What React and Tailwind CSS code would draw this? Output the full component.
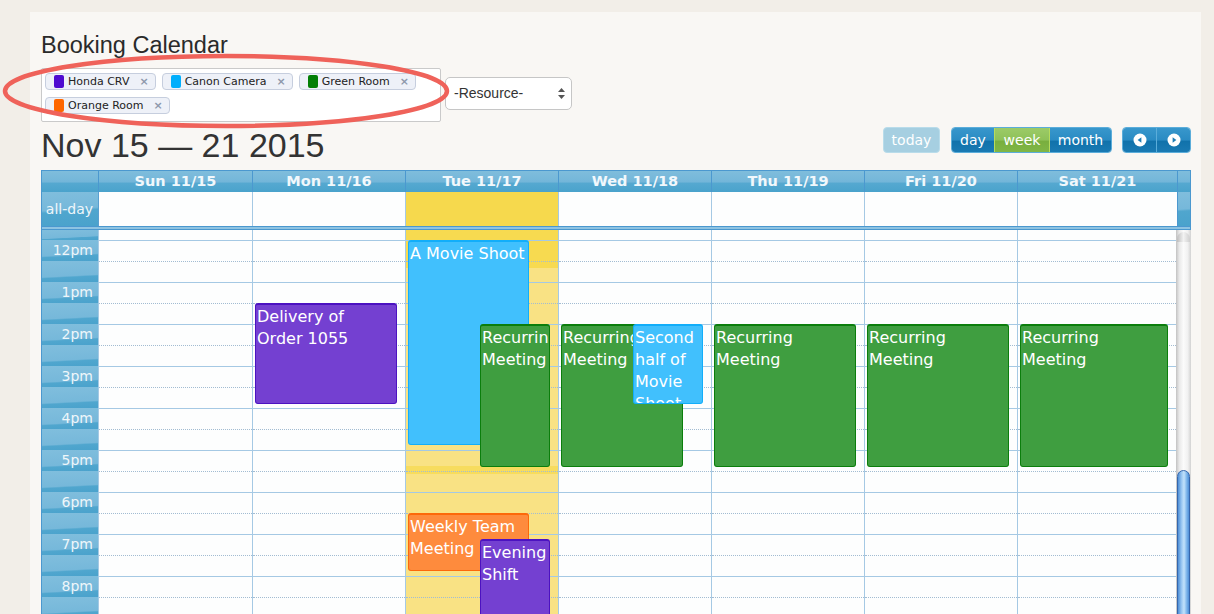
import React from "react";

const DV = "font-['DejaVu_Sans',Verdana,sans-serif]";
const LS = "font-['Liberation_Sans',Arial,sans-serif]";

const HEAD_BG =
  "bg-[linear-gradient(to_bottom,#7fbddc_0%,#73b6d9_52%,#55a8d0_58%,#4aa3cc_100%)]";
const SLOT_BG =
  "bg-[linear-gradient(177deg,#80bedd_0%,#76b8da_68%,#50a6ce_74%,#4aa2cc_100%)]";
const ALLDAY_BG =
  "bg-[linear-gradient(176deg,#80bedd_0%,#76b8da_50%,#50a6ce_56%,#4aa2cc_100%)]";
const BTN_BG =
  "bg-[linear-gradient(to_bottom,#3897cc_0%,#2a8bc3_50%,#1172ab_55%,#1a7ab3_100%)]";
const GREEN_BG =
  "bg-[linear-gradient(to_bottom,#9ccb68_0%,#8ec158_50%,#79af3e_55%,#80b646_100%)]";

const DAYS = ["Sun 11/15", "Mon 11/16", "Tue 11/17", "Wed 11/18", "Thu 11/19", "Fri 11/20", "Sat 11/21"];
const HEAD_W = ["w-[154px]", "w-[153px]", "w-[153px]", "w-[153px]", "w-[153px]", "w-[153px]", "w-[160px]"];
const BODY_W = ["w-[154px]", "w-[153px]", "w-[153px]", "w-[153px]", "w-[153px]", "w-[153px]", "w-[159px]"];
const HOURS = ["12pm", "1pm", "2pm", "3pm", "4pm", "5pm", "6pm", "7pm", "8pm"];
const SLOTS = Array.from({ length: 18 }, (_, i) => i);

const EV_STYLE = {
  blue: "bg-[#41c0fd] border-[#12aefa]",
  green: "bg-[#3f9e40] border-[#0b7e0c]",
  purple: "bg-[#7440d1] border-[#4c12c1]",
  orange: "bg-[#fe8b3d] border-[#fd680a]",
};

const EVENTS = {
  1: [{ top: 73, left: 2, width: 142, height: 101, c: "purple", lines: ["Delivery of", "Order 1055"] }],
  2: [
    { top: 10, left: 2, width: 121, height: 205, c: "blue", lines: ["A Movie Shoot"] },
    { top: 94, left: 74, width: 70, height: 143, c: "green", lines: ["Recurring", "Meeting"] },
    { top: 283, left: 2, width: 121, height: 58, c: "orange", lines: ["Weekly Team", "Meeting"] },
    { top: 309, left: 74, width: 70, height: 110, c: "purple", lines: ["Evening", "Shift"] },
  ],
  3: [
    { top: 94, left: 2, width: 122, height: 143, c: "green", lines: ["Recurring", "Meeting"] },
    { top: 94, left: 74, width: 70, height: 80, c: "blue", lines: ["Second", "half of", "Movie", "Shoot"] },
  ],
  4: [{ top: 94, left: 2, width: 142, height: 143, c: "green", lines: ["Recurring", "Meeting"] }],
  5: [{ top: 94, left: 2, width: 142, height: 143, c: "green", lines: ["Recurring", "Meeting"] }],
  6: [{ top: 94, left: 2, width: 148, height: 143, c: "green", lines: ["Recurring", "Meeting"] }],
};

const TAGS = [
  { name: "Honda CRV", color: "bg-[#4f0bd0]" },
  { name: "Canon Camera", color: "bg-[#00aefc]" },
  { name: "Green Room", color: "bg-[#037f05]" },
  { name: "Orange Room", color: "bg-[#fe6600]" },
];

function Tag({ name, color }) {
  return (
    <div className="flex h-[17px] items-center rounded-[4px] border border-[#c6cede] bg-[#eef1f8] pl-[8px] pr-[6px]">
      <span className={`h-[13px] w-[10px] rounded-[2px] ${color}`} />
      <span className={`${DV} ml-[4px] text-[11px] leading-[15px] text-[#222]`}>{name}</span>
      <span className={`${DV} ml-[10px] text-[11px] font-bold leading-[15px] text-[#8d98ab]`}>×</span>
    </div>
  );
}

function Event({ top, left, width, height, c, lines }) {
  return (
    <div
      className={`absolute overflow-hidden rounded-[3px] border border-t-2 pl-[1px] pt-[1px] ${EV_STYLE[c]}`}
      style={{ top, left, width, height }}
    >
      {lines.map((l, i) => (
        <div key={i} className={`${DV} whitespace-nowrap text-[16px] leading-[22px] text-white`}>
          {l}
        </div>
      ))}
    </div>
  );
}

function NavIcon({ dir }) {
  return (
    <svg width="14" height="14" viewBox="0 0 14 14">
      <circle cx="7" cy="7" r="6.5" fill="#fff" />
      {dir === "w" ? (
        <path d="M4.6 7 L8.4 4.2 L8.4 9.8 Z" fill="#1f7db5" />
      ) : (
        <path d="M9.4 7 L5.6 4.2 L5.6 9.8 Z" fill="#1f7db5" />
      )}
    </svg>
  );
}

function Calendar() {
  return (
    <div className="mt-[6px] w-[1150px] border-l border-[#4b98cf]">
      {/* header */}
      <div className={`flex h-[22px] border-t border-r border-[#4b98cf] ${HEAD_BG}`}>
        <div className="w-[56px]" />
        {DAYS.map((d, i) => (
          <div
            key={d}
            className={`${HEAD_W[i]} ${DV} flex items-center justify-center border-l border-[#4b98cf] text-[14.5px] font-bold text-[#f1f8fc]`}
          >
            {d}
          </div>
        ))}
        <div className="w-[13px] border-l border-[#4b98cf]" />
      </div>
      {/* all-day */}
      <div className="flex h-[34px] border-r border-[#4b98cf]">
        <div
          className={`${ALLDAY_BG} ${DV} flex w-[56px] items-center justify-end pr-[5px] text-[14px] text-[#eef6fa]`}
        >
          all-day
        </div>
        {DAYS.map((d, i) => (
          <div
            key={d}
            className={`${HEAD_W[i]} border-l ${i === 0 ? "border-[#5a9fd0]" : "border-[#a5c9e4]"} ${
              i === 2 ? "bg-[#f6d94d]" : "bg-[#fdfefe]"
            }`}
          />
        ))}
        <div className={`w-[13px] border-l border-[#4b98cf] ${ALLDAY_BG}`} />
      </div>
      {/* divider */}
      <div className="h-[4px] border-y border-r border-[#4b98cf] bg-[#8ec3e2]" />
      {/* body */}
      <div className="flex h-[388px] overflow-hidden">
        <div className="flex w-[56px] shrink-0 flex-col">
          <div className={`h-[10px] shrink-0 ${SLOT_BG}`} />
          {SLOTS.map((s) => (
            <div
              key={s}
              className={`${SLOT_BG} ${DV} h-[21px] shrink-0 pr-[5px] text-right text-[14px] leading-[21px] text-[#eef6fa]`}
            >
              {s % 2 === 0 ? HOURS[s / 2] : ""}
            </div>
          ))}
        </div>
        {DAYS.map((d, ci) => (
          <div
            key={d}
            className={`${BODY_W[ci]} relative flex shrink-0 flex-col border-l border-[#a5c9e4] ${
              ci === 2
                ? "bg-[linear-gradient(to_bottom,#f7da50_0px,#f7da50_38px,#f9e284_38px,#f9e284_236px,#f7dc5e_236px,#f7dc5e_244px,#f9e284_244px)]"
                : "bg-[#fdfefe]"
            }`}
          >
            <div className="h-[10px] shrink-0" />
            {SLOTS.map((s) => (
              <div
                key={s}
                className={`h-[21px] shrink-0 border-t ${
                  s % 2 === 0 ? "border-solid border-[#a5c9e4]" : "border-dotted border-[#a2bcd2]"
                }`}
              />
            ))}
            {(EVENTS[ci] || []).map((e, k) => (
              <Event key={k} {...e} />
            ))}
          </div>
        ))}
        {/* scrollbar */}
        <div className="flex w-[15px] shrink-0 flex-col bg-[linear-gradient(to_right,#c2c2c2,#e9e9e9_22%,#fbfbfb_50%,#f1f1f1_78%,#d2d2d2)]">
          <div className="mx-[1px] mt-[2px] h-[10px] shrink-0 rounded-t-[7px] bg-[linear-gradient(to_right,#bdbdbd,#f2f2f2_50%,#cfcfcf)]" />
          <div className="h-[228px] shrink-0" />
          <div className="mx-[1px] flex-1 rounded-t-[7px] border border-[#3567ad] bg-[linear-gradient(to_right,#4e8fd7,#9fcbf3_35%,#c2e2fb_55%,#7ab3ea_80%,#4f8fd6)]" />
        </div>
      </div>
    </div>
  );
}

export default function App() {
  return (
    <div className="relative h-[614px] w-full overflow-hidden bg-[#f2eee8]">
      <div className="ml-[30px] mt-[12px] h-[700px] w-[1171px] bg-[#f9f7f4] pl-[11px] pt-[20px]">
        <h1 className={`${LS} text-[23.5px] leading-[27px] text-[#2a2a2a]`}>Booking Calendar</h1>
        <div className="mt-[9px] flex items-start gap-[4px]">
          <div className="flex h-[54px] w-[400px] flex-wrap content-start gap-x-[6px] gap-y-[7px] rounded-[2px] border border-[#cacaca] bg-white pl-[3px] pt-[4px]">
            {TAGS.map((t) => (
              <Tag key={t.name} {...t} />
            ))}
          </div>
          <div className="mt-[9px] flex h-[33px] w-[127px] items-center justify-between rounded-[5px] border border-[#c6c6c6] bg-white pl-[8px] pr-[6px]">
            <span className={`${LS} text-[14px] text-[#333]`}>-Resource-</span>
            <svg width="7" height="11" viewBox="0 0 7 11">
              <path d="M3.5 0 L7 4 L0 4 Z" fill="#555" />
              <path d="M3.5 11 L7 7 L0 7 Z" fill="#555" />
            </svg>
          </div>
        </div>
        <div className="mt-[4px] flex w-[1150px] items-start justify-between">
          <h2 className={`${LS} text-[34px] leading-[38px] text-[#333]`}>Nov 15 — 21 2015</h2>
          <div className={`${DV} mt-[1px] flex items-start text-[14px] text-white`}>
            <div className="flex h-[26px] w-[57px] items-center justify-center rounded-[4px] border border-[#b9dcea] bg-[#a6cfe1]">
              today
            </div>
            <div className="ml-[11px] flex h-[26px] overflow-hidden rounded-[4px] border border-[#5badda]">
              <div className={`${BTN_BG} flex w-[42px] items-center justify-center`}>day</div>
              <div className={`${GREEN_BG} flex w-[56px] items-center justify-center border-x border-[#b7dc5c]`}>
                week
              </div>
              <div className={`${BTN_BG} flex w-[61px] items-center justify-center`}>month</div>
            </div>
            <div className="ml-[10px] flex h-[26px] w-[69px] overflow-hidden rounded-[4px] border border-[#5badda]">
              <div className={`${BTN_BG} flex flex-1 items-center justify-center`}>
                <NavIcon dir="w" />
              </div>
              <div className="w-px bg-[#5badda]" />
              <div className={`${BTN_BG} flex flex-1 items-center justify-center`}>
                <NavIcon dir="e" />
              </div>
            </div>
          </div>
        </div>
        <Calendar />
      </div>
      <svg className="pointer-events-none absolute left-0 top-0" width="470" height="170" viewBox="0 0 470 170">
        <ellipse cx="226" cy="91" rx="221" ry="35" fill="none" stroke="#ef625a" strokeWidth="4.5" />
      </svg>
    </div>
  );
}
